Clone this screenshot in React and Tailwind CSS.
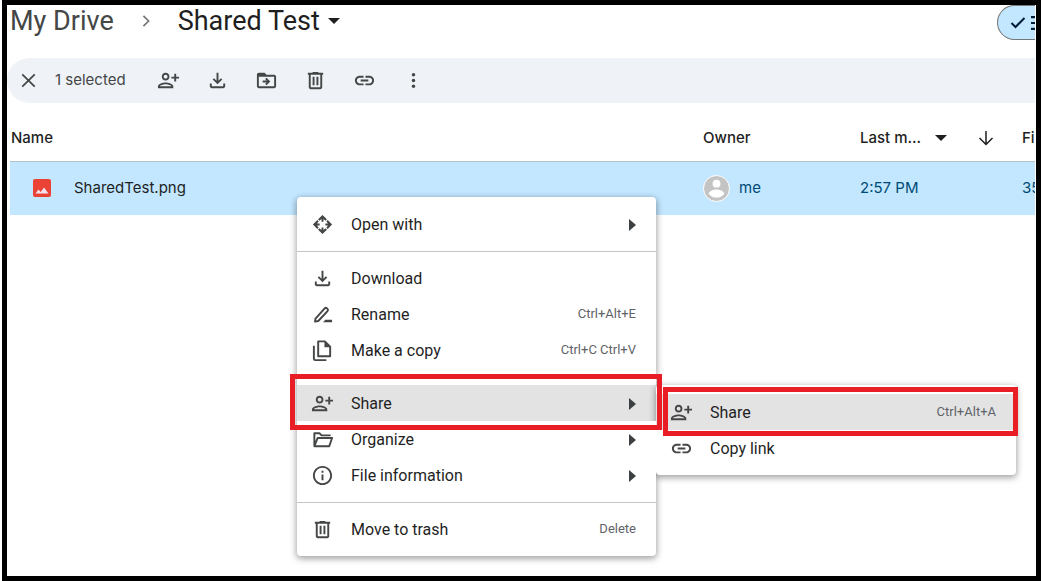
import React from 'react';

const Icon = ({ children, className = 'size-[23px]' }) => (
  <svg viewBox="0 0 24 24" fill="currentColor" aria-hidden="true" className={`shrink-0 ${className}`}>
    {children}
  </svg>
);

const PersonAdd = () => (
  <Icon>
    <path d="M13 8c0-2.21-1.79-4-4-4S5 5.79 5 8s1.79 4 4 4 4-1.79 4-4zm-2 0c0 1.1-.9 2-2 2s-2-.9-2-2 .9-2 2-2 2 .9 2 2zM1 18v2h16v-2c0-2.66-5.33-4-8-4s-8 1.34-8 4zm2 0c.2-.71 3.3-2 6-2 2.69 0 5.78 1.28 6 2H3zm17-5v-3h3V8h-3V5h-2v3h-3v2h3v3h2z" />
  </Icon>
);

const Download = () => (
  <Icon>
    <path d="M18 15v3H6v-3H4v3c0 1.1.9 2 2 2h12c1.1 0 2-.9 2-2v-3h-2zm-1-4l-1.41-1.41L13 12.17V4h-2v8.17L8.41 9.59 7 11l5 5 5-5z" />
  </Icon>
);

const FolderMove = () => (
  <Icon>
    <path d="M20 6h-8l-2-2H4c-1.1 0-2 .9-2 2v12c0 1.1.9 2 2 2h16c1.1 0 2-.9 2-2V8c0-1.1-.9-2-2-2zm0 12H4V8h16v10z" />
    <path d="M12.16 12H8v2h4.16l-1.59 1.59L11.99 17 16 13.01 11.99 9l-1.41 1.41L12.16 12z" />
  </Icon>
);

const Trash = () => (
  <Icon>
    <path d="M15 4V3H9v1H4v2h1v13c0 1.1.9 2 2 2h10c1.1 0 2-.9 2-2V6h1V4h-5zm2 15H7V6h10v13zM9 8h2v9H9zm4 0h2v9h-2z" />
  </Icon>
);

const LinkIcon = () => (
  <Icon>
    <path d="M17 7h-4v2h4c1.65 0 3 1.35 3 3s-1.35 3-3 3h-4v2h4c2.76 0 5-2.24 5-5s-2.24-5-5-5zm-6 8H7c-1.65 0-3-1.35-3-3s1.35-3 3-3h4V7H7c-2.76 0-5 2.24-5 5s2.24 5 5 5h4v-2zm-3-4h8v2H8z" />
  </Icon>
);

const More = () => (
  <Icon>
    <circle cx="12" cy="6" r="1.8" />
    <circle cx="12" cy="12" r="1.8" />
    <circle cx="12" cy="18" r="1.8" />
  </Icon>
);

const Close = () => (
  <Icon>
    <path d="M5.5 5.500l13 13M18.500 5.500l-13 13" fill="none" stroke="currentColor" strokeWidth="1.8" />
  </Icon>
);

const OpenWith = () => (
  <Icon>
    <path d="M12 2l4.600 4.600-1.400 1.400L13 5.900V9h-2V5.900L8.800 8 7.400 6.600zM12 22l-4.600-4.600 1.400-1.400 2.200 2.100V15h2v3.100l2.200-2.100 1.400 1.400zM2 12l4.600-4.600L8 8.800 5.900 11H9v2H5.900L8 15.200l-1.400 1.400zM22 12l-4.600 4.600-1.400-1.400 2.100-2.200H15v-2h3.100L16 8.800l1.400-1.400z" />
    <path d="M12 3.500l3 3H9zM12 20.500l3-3H9zM3.500 12l3-3v6zM20.500 12l-3-3v6z" />
  </Icon>
);

const Rename = () => (
  <Icon>
    <path
      d="M4.200 19.400l.5-3.200L14.300 5.600a1.700 1.700 0 012.400 0l.5.5a1.700 1.700 0 010 2.400L7.600 18.800z"
      fill="none"
      stroke="currentColor"
      strokeWidth="2"
      strokeLinejoin="round"
    />
    <path d="M15 17.500h7v2.700h-9.500z" />
  </Icon>
);

const Copy = () => (
  <Icon>
    <path d="M7.500 2.500h7L20 8v10H7.500z" fill="none" stroke="currentColor" strokeWidth="2" strokeLinejoin="round" />
    <path d="M14 2.500v6h6z" />
    <path d="M3 7v13.500q0 1.500 1.500 1.500H16" fill="none" stroke="currentColor" strokeWidth="2" />
  </Icon>
);

const FolderOpen = () => (
  <Icon>
    <path
      d="M3.500 19V5.500H9l2 2.200h9.500M3.500 19H19l3-8.600H7z"
      fill="none"
      stroke="currentColor"
      strokeWidth="2"
      strokeLinejoin="round"
    />
  </Icon>
);

const Info = () => (
  <Icon>
    <path d="M11 7h2v2h-2zm0 4h2v6h-2zm1-9C6.480 2 2 6.480 2 12s4.480 10 10 10 10-4.480 10-10S17.520 2 12 2zm0 18c-4.410 0-8-3.590-8-8s3.590-8 8-8 8 3.590 8 8-3.590 8-8 8z" />
  </Icon>
);

const Caret = () => (
  <svg viewBox="0 0 12 6" fill="currentColor" aria-hidden="true" className="h-[6px] w-3 shrink-0">
    <path d="M0 0h12L6 6z" />
  </svg>
);

const MenuItem = ({ icon, label, shortcut, hasSubmenu, active, children }) => (
  <li className="relative">
    <button
      className={`flex h-9 w-full items-center pr-5 pl-[14px] text-left text-[#1f1f1f] ${active ? 'bg-[#e3e3e3]' : 'bg-white'}`}
    >
      <span className="text-[#444746]">{icon}</span>
      <span className="ml-[17px] grow pt-0.5 text-base">{label}</span>
      {shortcut && <span className="text-[13px] text-[#5f6368]">{shortcut}</span>}
      {hasSubmenu && (
        <svg viewBox="0 0 7 12" fill="#3c4043" aria-hidden="true" className="mt-0.5 h-3 w-[7px]">
          <path d="M0 0l7 6-7 6z" />
        </svg>
      )}
    </button>
    {children}
  </li>
);

const tools = [
  { label: 'Share', icon: <PersonAdd /> },
  { label: 'Download', icon: <Download /> },
  { label: 'Move', icon: <FolderMove /> },
  { label: 'Move to trash', icon: <Trash /> },
  { label: 'Copy link', icon: <LinkIcon /> },
  { label: 'More actions', icon: <More /> },
];

const menuShadow = 'rounded-[4px] bg-white shadow-[0_2px_6px_1px_rgba(0,0,0,0.35)]';

const ShareMenu = () => (
  <ul className={`absolute top-0 left-full w-[360px] py-[9px] ${menuShadow}`}>
    <MenuItem icon={<PersonAdd />} label="Share" shortcut="Ctrl+Alt+A" active>
      <div className="pointer-events-none absolute -top-[7px] -right-[2px] -bottom-[6px] left-[7px] z-10 border-5 border-[#e91d25]" />
    </MenuItem>
    <MenuItem icon={<LinkIcon />} label="Copy link" />
  </ul>
);

const ContextMenu = () => (
  <ul className={`absolute top-[192px] left-[290px] w-[359px] py-[9px] font-[family-name:Roboto,sans-serif] ${menuShadow}`}>
    <MenuItem icon={<OpenWith />} label="Open with" hasSubmenu />
    <li className="mt-[9px] mb-2 h-px bg-[#c4c4c4]" />
    <MenuItem icon={<Download />} label="Download" />
    <MenuItem icon={<Rename />} label="Rename" shortcut="Ctrl+Alt+E" />
    <MenuItem icon={<Copy />} label="Make a copy" shortcut="Ctrl+C Ctrl+V" />
    <li className="my-2 h-px bg-[#c4c4c4]" />
    <MenuItem icon={<PersonAdd />} label="Share" hasSubmenu active>
      <ShareMenu />
      <div className="pointer-events-none absolute -top-[11px] -right-[6px] -bottom-[9px] -left-[7px] z-10 border-5 border-[#e91d25]" />
    </MenuItem>
    <MenuItem icon={<FolderOpen />} label="Organize" hasSubmenu />
    <MenuItem icon={<Info />} label="File information" hasSubmenu />
    <li className="mt-[9px] mb-2 h-px bg-[#c4c4c4]" />
    <MenuItem icon={<Trash />} label="Move to trash" shortcut="Delete" />
  </ul>
);

const App = () => {
  return (
    <div className="min-h-screen bg-white pl-[2px] flex font-[family-name:Inter,sans-serif] text-[#1f1f1f]">
      <div className="relative min-w-0 grow overflow-hidden border-5 border-black pr-px">
        <header className="flex h-[53px] items-start justify-between overflow-hidden">
          <nav className="flex h-8 items-center pl-[3px] font-[family-name:Roboto,sans-serif] text-[27px] whitespace-nowrap">
            <a href="#my-drive" className="text-[#444746]">My Drive</a>
            <svg viewBox="0 0 8 14" fill="none" stroke="#747775" strokeWidth="2" aria-hidden="true" className="mx-7 h-3 w-2">
              <path d="M1 1l6 6-6 6" />
            </svg>
            <button className="flex items-center gap-2">
              Shared Test <Caret />
            </button>
          </nav>
          <button
            aria-label="List view"
            className="flex h-[35px] w-[38px] shrink-0 items-center gap-[5px] overflow-hidden rounded-l-full border border-r-0 border-[#747775] bg-[#c2e7ff] pl-3 text-[#001d35]"
          >
            <svg viewBox="0 0 16 12" fill="none" stroke="currentColor" strokeWidth="2" className="h-3 w-4 shrink-0">
              <path d="M1.500 6l4 4L14.500 1" />
            </svg>
            <svg viewBox="0 0 18 14" fill="currentColor" className="h-[14px] w-[18px] shrink-0">
              <path d="M0 0h18v2.200H0zM0 5.900h18v2.200H0zM0 11.800h18V14H0z" />
            </svg>
          </button>
        </header>

        <div className="flex h-[45px] items-center rounded-l-full bg-[#eff3f8] pl-[10px] text-[#444746]">
          <button aria-label="Clear selection"><Close /></button>
          <span className="ml-[15px] mr-[14px] w-[75px] text-[15px] whitespace-nowrap">1 selected</span>
          {tools.map((tool) => (
            <button key={tool.label} aria-label={tool.label} className="flex w-[49px] justify-center">
              {tool.icon}
            </button>
          ))}
        </div>

        <div className="overflow-hidden pt-3 pl-[3px]">
          <table className="w-full table-fixed text-left text-[15px] whitespace-nowrap">
            <thead>
              <tr className="h-[46px] border-b border-[#b4c0ca]">
                <th className="pl-px font-medium">Name</th>
                <th className="w-[157px] font-medium">Owner</th>
                <th className="w-[162px] font-medium">
                  <div className="flex items-center">
                    <span className="w-[75px]">Last m...</span>
                    <Caret />
                    <svg viewBox="0 0 16 16" fill="none" stroke="currentColor" strokeWidth="1.5" aria-hidden="true" className="ml-[31px] size-4">
                      <path d="M8 1v13M1.500 8L8 14.500 14.500 8" />
                    </svg>
                  </div>
                </th>
                <th className="w-[13px] font-medium">Fi</th>
              </tr>
            </thead>
            <tbody>
              <tr className="h-[54px] bg-[#c2e7ff] text-[#004a77]">
                <td className="pl-[23px] text-[#1f1f1f]">
                  <div className="flex items-center gap-[23px]">
                    <svg viewBox="0 0 18 18" aria-hidden="true" className="size-[18px]">
                      <rect width="18" height="18" rx="2" fill="#ea4335" />
                      <path d="M2.500 14.500l3-4 2.200 2.500 3.300-4.500 4.500 6z" fill="#f3e3ee" />
                    </svg>
                    SharedTest.png
                  </div>
                </td>
                <td>
                  <div className="flex items-center gap-[9px]">
                    <svg viewBox="0 0 27 27" aria-hidden="true" className="size-[27px]">
                      <circle cx="13.5" cy="13.5" r="13" fill="#c4c4c4" stroke="#fff" />
                      <circle cx="13.5" cy="8.7" r="3.9" fill="#fff" />
                      <path d="M5.600 18.400c1.200-2.900 5-4 7.900-4s6.700 1.100 7.900 4c-1.500 2.600-4.500 4.200-7.900 4.200s-6.400-1.600-7.900-4.200z" fill="#fff" />
                    </svg>
                    me
                  </div>
                </td>
                <td>2:57 PM</td>
                <td className="overflow-hidden">35</td>
              </tr>
            </tbody>
          </table>
        </div>

        <ContextMenu />
      </div>
    </div>
  );
};

export default App;
